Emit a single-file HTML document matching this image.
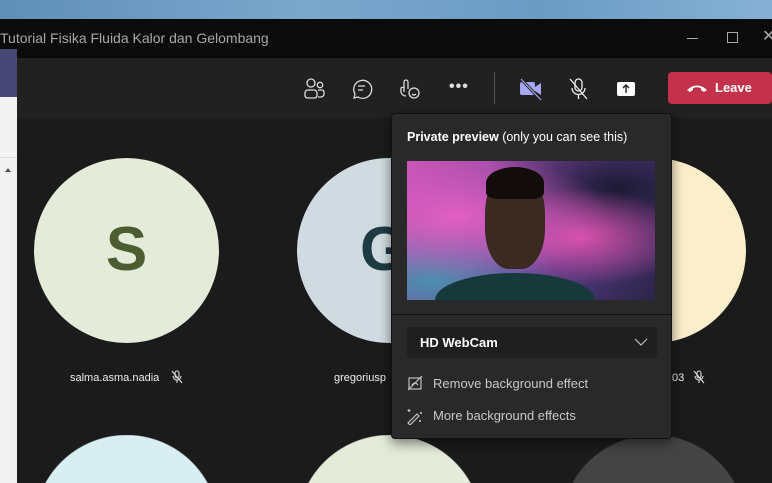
<!DOCTYPE html>
<html style="width:772px;height:483px;overflow:hidden"><head><style>
*{margin:0;padding:0;box-sizing:border-box}
body{width:772px;height:483px;overflow:hidden;background:#1b1b1b;font-family:"Liberation Sans","DejaVu Sans",sans-serif}
#r{position:relative;width:772px;height:483px;overflow:hidden}
.a{position:absolute}
.c{position:absolute;border-radius:50%}
.b{position:absolute;top:435px;width:185px;height:48px}
.nm{position:absolute;color:#eee;font-size:11px;top:372px}
</style></head><body><div id="r">
<div class="a" style="left:0;top:0;width:772px;height:19px;background:linear-gradient(90deg,#5f8fb8,#7ba7cc 40%,#6a9bc4 70%,#86b1d4)"></div>
<div class="a" style="left:0;top:19px;width:772px;height:39px;background:#0b0b0b"></div>
<div class="a" style="left:0;top:30px;color:#a8a8a8;font-size:14px">Tutorial Fisika Fluida Kalor dan Gelombang</div>
<div class="a" style="left:687px;top:38px;width:11px;height:1px;background:#aaa"></div>
<div class="a" style="left:727px;top:32px;width:11px;height:11px;border:1px solid #aaa"></div>
<div class="a" style="left:762px;top:26px;color:#aaa;font-size:16px">✕</div>
<div class="a" style="left:17px;top:58px;width:755px;height:60px;background:#212121"></div>
<div class="a" style="left:0;top:49px;width:17px;height:48px;background:#464775"></div>
<div class="a" style="left:0;top:97px;width:17px;height:386px;background:#f3f3f3"></div>
<div class="a" style="left:0;top:157px;width:17px;height:1px;background:#ddd"></div>
<div class="a" style="left:5px;top:168px;border:3px solid transparent;border-bottom:4px solid #555;border-top:0"></div>
<svg class="a" style="left:300px;top:75px" width="340" height="28" fill="none" stroke="#ddd" stroke-width="1.3">
<circle cx="11" cy="8" r="4"/><circle cx="20" cy="10" r="2.7"/><path d="M5 21 v-3 a3 3 0 0 1 3-3 h6 a3 3 0 0 1 3 3 v3 a3 3 0 0 1-3 2h-6 a3 3 0 0 1-3-2z"/><path d="M18 15 h4 a2 2 0 0 1 2 2 v2 a3 3 0 0 1-3 3 h-3"/>
<path d="M54 23 l1-4 a9 9 0 1 1 3 3 z"/><path d="M58 11 h7 M58 15 h5"/>
<path d="M104 17 v-10 a2 2 0 0 1 4 0 v7 M104 13 a2 2 0 0 0-3 0 v4 a5 5 0 0 0 5 4"/><circle cx="114" cy="18" r="5"/><path d="M112 19 q2 2 4 0"/>
</svg>
<div class="a" style="left:449px;top:78px;color:#ddd;font-size:16px;letter-spacing:1px;font-weight:bold">•••</div>
<div class="a" style="left:494px;top:72px;width:1px;height:32px;background:#555"></div>
<svg class="a" style="left:518px;top:76px" width="120" height="26">
<rect x="2" y="6" width="15" height="13" rx="2" fill="#a6a7f0"/><path d="M17 11 l6-4 v12 l-6-4z" fill="#a6a7f0"/><path d="M3 3 l20 21" stroke="#212121" stroke-width="3"/><path d="M3 3 l20 21" stroke="#a6a7f0" stroke-width="1.2"/>
<rect x="57" y="3" width="7" height="12" rx="3.5" fill="none" stroke="#eee" stroke-width="1.3"/><path d="M54 12 a6.5 6.5 0 0 0 13 0 M60.5 19 v4 M52 3 l17 20" stroke="#eee" stroke-width="1.3" fill="none"/>
<rect x="99" y="6" width="18" height="14" rx="2" fill="#fff"/><path d="M108 17 v-8 M105 12 l3-3 3 3" stroke="#212121" stroke-width="1.4" fill="none"/>
</svg>
<div class="a" style="left:668px;top:72px;width:104px;height:32px;background:#c4314b;border-radius:4px;color:#fff;font-weight:bold;font-size:13px;line-height:32px;padding-left:47px">Leave</div>
<svg class="a" style="left:686px;top:83px" width="22" height="10"><path d="M1 7 q10-9 20 0 l-3 2 -3-2 v-2 q-4-1.5-8 0 v2 l-3 2z" fill="#fff"/></svg>
<div class="c" style="left:34px;top:158px;width:185px;height:185px;background:#e4ebd9"></div>
<div class="a" style="left:34px;top:214px;width:185px;text-align:center;color:#4b5d31;font-size:62px;font-weight:bold">S</div>
<div class="c" style="left:297px;top:158px;width:185px;height:185px;background:#d0dbe1"></div>
<div class="a" style="left:360px;top:214px;color:#1e3b44;font-size:62px;font-weight:bold">G</div>
<div class="c" style="left:561px;top:158px;width:185px;height:185px;background:#fbeecb"></div>
<div class="b" style="left:34px;background:radial-gradient(circle at 92.5px 92.5px,#d9eef2 92px,transparent 93px)"></div>
<div class="b" style="left:297px;background:radial-gradient(circle at 92.5px 92.5px,#e4ebd9 92px,transparent 93px)"></div>
<div class="b" style="left:561px;background:radial-gradient(circle at 92.5px 92.5px,#444 92px,transparent 93px)"></div>
<div class="nm" style="left:70px">salma.asma.nadia</div>
<div class="nm" style="left:334px">gregoriusp</div>
<div class="nm" style="left:672px">03</div>
<svg class="a" style="left:170px;top:370px" width="14" height="14" stroke="#ddd" fill="none" stroke-width="1.1"><rect x="5" y="1" width="4" height="7" rx="2"/><path d="M3 6 a4 4 0 0 0 8 0 M7 10 v3 M2 1 l10 12"/></svg>
<svg class="a" style="left:692px;top:370px" width="14" height="14" stroke="#ddd" fill="none" stroke-width="1.1"><rect x="5" y="1" width="4" height="7" rx="2"/><path d="M3 6 a4 4 0 0 0 8 0 M7 10 v3 M2 1 l10 12"/></svg>
<div class="a" style="left:391px;top:113px;width:281px;height:326px;background:#292929;border:1px solid #111;border-radius:4px;box-shadow:0 4px 12px rgba(0,0,0,.5)"></div>
<div class="a" style="left:407px;top:130px;color:#fff;font-size:12.5px"><b>Private preview</b> (only you can see this)</div>
<div class="a" style="left:407px;top:161px;width:248px;height:139px;overflow:hidden;background:radial-gradient(ellipse at 20% 40%,#e25fc3,transparent 55%),radial-gradient(ellipse at 70% 55%,#d74fa9,transparent 45%),radial-gradient(ellipse at 85% 20%,#1c1a33,transparent 45%),radial-gradient(ellipse at 10% 85%,#4b8fb0,transparent 40%),linear-gradient(135deg,#c854b7,#5a3f8e 60%,#2b2447)">
<div class="a" style="left:28px;top:112px;width:160px;height:27px;border-radius:80px 80px 0 0/27px 27px 0 0;background:#16393a"></div>
<div class="a" style="left:78px;top:8px;width:60px;height:100px;border-radius:45% 45% 40% 40%;background:#3a2a22"></div>
<div class="a" style="left:79px;top:6px;width:58px;height:32px;border-radius:50% 50% 20% 20%;background:#120d0b"></div>
</div>
<div class="a" style="left:392px;top:314px;width:279px;height:1px;background:#111"></div>
<div class="a" style="left:407px;top:327px;width:250px;height:31px;background:#1f1f1f;border-radius:3px;color:#fff;font-weight:bold;font-size:13px;line-height:31px;padding-left:13px">HD WebCam</div>
<svg class="a" style="left:634px;top:338px" width="14" height="9"><path d="M1 1 l6 6 6-6" stroke="#bbb" fill="none" stroke-width="1.2"/></svg>
<svg class="a" style="left:407px;top:375px" width="16" height="16" stroke="#ccc" fill="none" stroke-width="1.1"><rect x="2" y="3" width="12" height="11"/><path d="M1 15 L15 1 M5 10 q3-4 6 0"/></svg>
<div class="a" style="left:433px;top:376px;color:#c8c8c8;font-size:13px">Remove background effect</div>
<svg class="a" style="left:406px;top:407px" width="18" height="18" stroke="#ccc" fill="none" stroke-width="1.1"><path d="M2 16 l9-9 2 2-9 9z M3 2 v3 M1.5 3.5 h3 M15 5 v2 M14 6 h2 M14 13 v2 M13 14 h2"/></svg>
<div class="a" style="left:433px;top:408px;color:#c8c8c8;font-size:13px">More background effects</div>
</div></body></html>
